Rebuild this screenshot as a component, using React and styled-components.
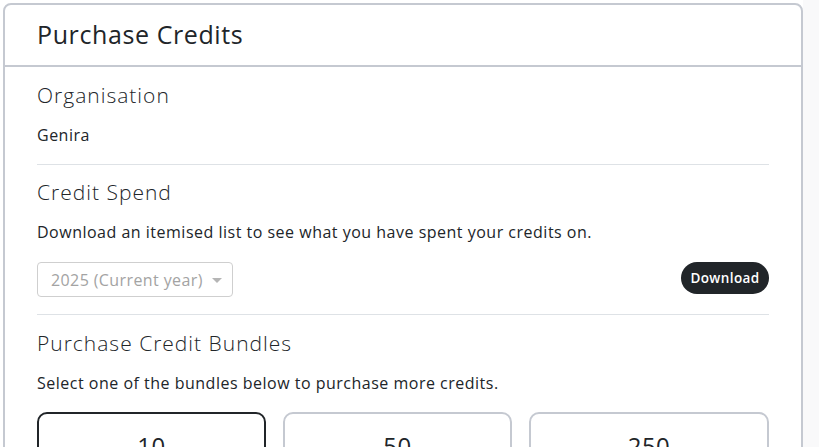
import React, { useState } from 'react';
import styled, { createGlobalStyle } from 'styled-components';

const GlobalStyle = createGlobalStyle`
  html, body {
    margin: 0;
    padding: 0;
    background: #fff;
    font-family: "Open Sans", "Liberation Sans", sans-serif;
    color: #212529;
  }
  * { box-sizing: border-box; }
`;

const Page = styled.div`
  display: flex;
  height: 447px;
  overflow: hidden;
`;

const Main = styled.div`
  padding: 3px 0 0 3px;
  flex: 0 0 auto;
`;

const Aside = styled.div`
  flex: 1;
  background: #f9f9fa;
`;

const Card = styled.div`
  width: 800px;
  border: 2px solid #c5c9d1;
  border-radius: 8px;
  background: #fff;
`;

const CardHeader = styled.div`
  height: 62px;
  display: flex;
  align-items: center;
  padding: 0 32px 2px;
  border-bottom: 2px solid #c5c9d1;
`;

const Title = styled.h1`
  margin: 0;
  font-size: 25px;
  font-weight: 500;
  letter-spacing: 0.6px;
`;

const CardBody = styled.div`
  padding: 0 32px;
`;

const Section = styled.section`
  padding: ${p => p.$top || 15}px 0 17px;
  border-bottom: ${p => (p.$last ? 'none' : '1px solid #dee2e6')};
`;

const Heading = styled.h2`
  margin: 0 0 15px;
  font-size: 21px;
  font-weight: 300;
  line-height: 26px;
  letter-spacing: 1px;
`;

const Text = styled.p`
  margin: 0 0 ${p => p.$mb || 0}px;
  font-size: 16px;
  line-height: 24px;
  letter-spacing: 0.5px;
`;

const Controls = styled.div`
  display: flex;
  justify-content: space-between;
  align-items: flex-start;
`;

const Select = styled.div`
  width: 196px;
  height: 35px;
  border: 1px solid #cfcfcf;
  border-radius: 4px;
  display: flex;
  align-items: center;
  padding: 0 12px 0 13px;
  gap: 9px;
  font-size: 16px;
  letter-spacing: 0.4px;
  color: #a3a3a3;
  white-space: nowrap;
`;

const Caret = styled.span`
  width: 0;
  height: 0;
  border-left: 5px solid transparent;
  border-right: 5px solid transparent;
  border-top: 5px solid #b5b5b5;
  margin-top: 1px;
`;

const DownloadButton = styled.button`
  height: 32px;
  padding: 0;
  width: 88px;
  border: none;
  border-radius: 16px;
  background: #212529;
  color: #fff;
  font-family: inherit;
  font-size: 13.5px;
  font-weight: 600;
  letter-spacing: 0.4px;
  cursor: pointer;
`;

const Bundles = styled.div`
  display: grid;
  grid-template-columns: 229px 229px 1fr;
  gap: 17px;
`;

const Bundle = styled.button`
  height: 120px;
  border: 2px solid ${p => (p.$selected ? '#212529' : '#c5c9d1')};
  border-radius: 10px;
  background: #fff;
  display: flex;
  justify-content: center;
  align-items: flex-start;
  padding-top: 15px;
  font-family: inherit;
  font-size: 24px;
  font-weight: 400;
  letter-spacing: 0.5px;
  color: #212529;
  cursor: pointer;
`;

const bundles = [10, 50, 250];

export default function App() {
  const [selected, setSelected] = useState(10);
  return (
    <>
      <GlobalStyle />
      <Page>
        <Main>
          <Card>
            <CardHeader>
              <Title>Purchase Credits</Title>
            </CardHeader>
            <CardBody>
              <Section>
                <Heading>Organisation</Heading>
                <Text>Genira</Text>
              </Section>
              <Section $top={14}>
                <Heading>Credit Spend</Heading>
                <Text $mb={18}>Download an itemised list to see what you have spent your credits on.</Text>
                <Controls>
                  <Select>
                    2025 (Current year)
                    <Caret />
                  </Select>
                  <DownloadButton>Download</DownloadButton>
                </Controls>
              </Section>
              <Section $last>
                <Heading>Purchase Credit Bundles</Heading>
                <Text $mb={17}>Select one of the bundles below to purchase more credits.</Text>
                <Bundles>
                  {bundles.map(n => (
                    <Bundle key={n} $selected={selected === n} onClick={() => setSelected(n)}>
                      {n}
                    </Bundle>
                  ))}
                </Bundles>
              </Section>
            </CardBody>
          </Card>
        </Main>
        <Aside />
      </Page>
    </>
  );
}
